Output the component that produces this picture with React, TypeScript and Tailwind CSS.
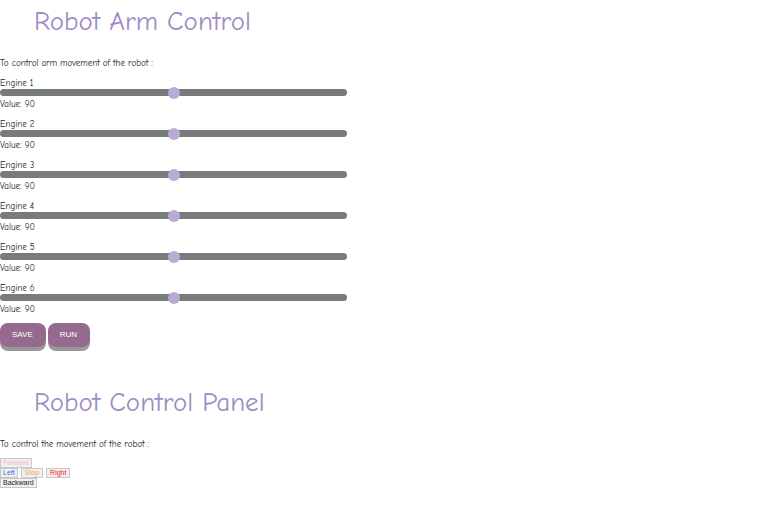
import { useState } from "react";

const comic = "font-['Comic_Sans_MS','Comic_Neue','Open_Sans',sans-serif]";

function Engine({ index }: { index: number }) {
  const [value, setValue] = useState(90);
  const id = `engine-${index}`;
  return (
    <div className="flex flex-col">
      <label htmlFor={id} className="h-3 leading-3">
        Engine {index}
      </label>
      <input
        id={id}
        type="range"
        min={0}
        max={180}
        value={value}
        onChange={(e) => setValue(Number(e.target.value))}
        className="mb-[2px] block h-[7px] w-full appearance-none rounded-full bg-[#777b7b] outline-none [&::-webkit-slider-thumb]:size-3 [&::-webkit-slider-thumb]:appearance-none [&::-webkit-slider-thumb]:rounded-full [&::-webkit-slider-thumb]:bg-[#b8abd6]"
      />
      <output htmlFor={id} className="h-3 leading-3">
        Value: {value}
      </output>
    </div>
  );
}

const heading = "px-[34px] text-[27px] leading-[44px] font-medium text-[#9c8cc4]";

const actionButton =
  "h-6 rounded-lg bg-[#966a8f] pr-[13px] pl-3 font-['Liberation_Sans',Arial,sans-serif] text-[8px] leading-6 text-white shadow-[0_4px_#999]";

const moveButton =
  "h-[10px] border border-[#c8c8c8] bg-[#f0f0f0] font-['Liberation_Sans',Arial,sans-serif] text-[7px] leading-[8px]";

export default function App() {
  return (
    <main className={`${comic} bg-white text-[9px] leading-3 text-[#222]`}>
      <section>
        <h1 className={heading}>Robot Arm Control</h1>
        <p className="mt-[13px]">To control arm movement of the robot :</p>
        <form className="mt-2" onSubmit={(e) => e.preventDefault()}>
          <div className="flex w-[347px] max-w-full flex-col gap-2">
            {[1, 2, 3, 4, 5, 6].map((n) => (
              <Engine key={n} index={n} />
            ))}
          </div>
          <div className="mt-2 flex gap-[2px]">
            <button type="submit" className={actionButton}>SAVE</button>
            <button type="button" className={actionButton}>RUN</button>
          </div>
        </form>
      </section>
      <section className="mt-[34px]">
        <h1 className={heading}>Robot Control Panel</h1>
        <p className="mt-[13px]">To control the movement of the robot :</p>
        <div className="mt-2 flex flex-col items-start">
          <button type="button" className={`${moveButton} px-[2px] text-[#ffb6c1]`}>Forward</button>
          <div className="flex gap-[3px]">
            <button type="button" className={`${moveButton} px-[2px] text-[#4169e1]`}>Left</button>
            <button type="button" className={`${moveButton} px-[3px] text-[#f4a460]`}>Stop</button>
            <button type="button" className={`${moveButton} px-[3px] text-[#ff2020]`}>Right</button>
          </div>
          <button type="button" className={`${moveButton} px-[2px] text-[#222]`}>Backward</button>
        </div>
      </section>
    </main>
  );
}
